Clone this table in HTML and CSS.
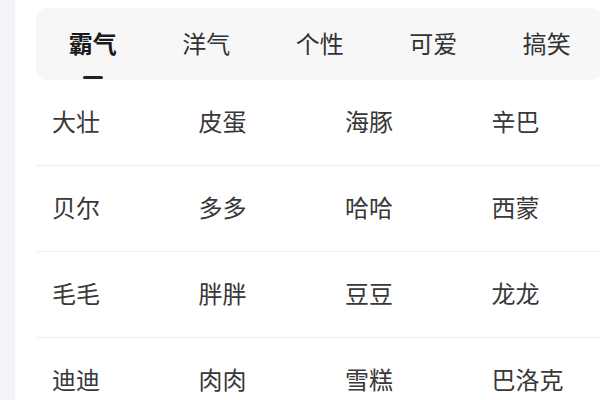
FILE: index.html
```html
<!DOCTYPE html>
<html lang="zh-CN">
<head>
<meta charset="utf-8">
<link rel="stylesheet" href="styles.css">
</head>
<body>
<div class="page">
  <aside class="side"></aside>
  <main class="main">
    <nav class="tabs">
      <div class="tab active">霸气</div>
      <div class="tab">洋气</div>
      <div class="tab">个性</div>
      <div class="tab">可爱</div>
      <div class="tab">搞笑</div>
    </nav>
    <div class="grid">
      <div class="row"><span class="cell">大壮</span><span class="cell">皮蛋</span><span class="cell">海豚</span><span class="cell">辛巴</span></div>
      <div class="row"><span class="cell">贝尔</span><span class="cell">多多</span><span class="cell">哈哈</span><span class="cell">西蒙</span></div>
      <div class="row"><span class="cell">毛毛</span><span class="cell">胖胖</span><span class="cell">豆豆</span><span class="cell">龙龙</span></div>
      <div class="row"><span class="cell">迪迪</span><span class="cell">肉肉</span><span class="cell">雪糕</span><span class="cell">巴洛克</span></div>
    </div>
  </main>
</div>
</body>
</html>
```
FILE: styles.css
```css
html, body {
  margin: 0;
  padding: 0;
  background: #ffffff;
}
body {
  width: 600px;
  height: 400px;
  overflow: hidden;
  font-family: "Noto Sans CJK SC", "Noto Sans", sans-serif;
  color: #333333;
}
.page {
  display: flex;
  height: 400px;
}
.side {
  flex: 0 0 15px;
  background: #f4f4f8;
}
.main {
  flex: 1;
  padding-left: 21px;
  overflow: hidden;
}
.tabs {
  margin-top: 8px;
  width: 568px;
  height: 72px;
  background: #f7f7f7;
  border-radius: 12px;
  display: flex;
}
.tab {
  flex: 0 0 113.5px;
  display: flex;
  align-items: center;
  justify-content: center;
  box-sizing: border-box;
  padding-bottom: 4px;
  font-size: 24px;
  color: #333333;
  position: relative;
}
.tab.active {
  font-weight: 700;
  color: #1a1a1a;
}
.tab.active::after {
  content: "";
  position: absolute;
  left: 50%;
  bottom: 1px;
  width: 20px;
  height: 3px;
  margin-left: -10px;
  background: #222222;
  border-radius: 2px;
}
.grid {
  width: 600px;
}
.row {
  display: flex;
  box-sizing: border-box;
  height: 86px;
  padding-bottom: 4px;
  border-bottom: 1px solid #eeeeee;
  align-items: center;
}
.cell {
  flex: 0 0 146.5px;
  box-sizing: border-box;
  padding-left: 16px;
  font-size: 24px;
  color: #383838;
}
```
